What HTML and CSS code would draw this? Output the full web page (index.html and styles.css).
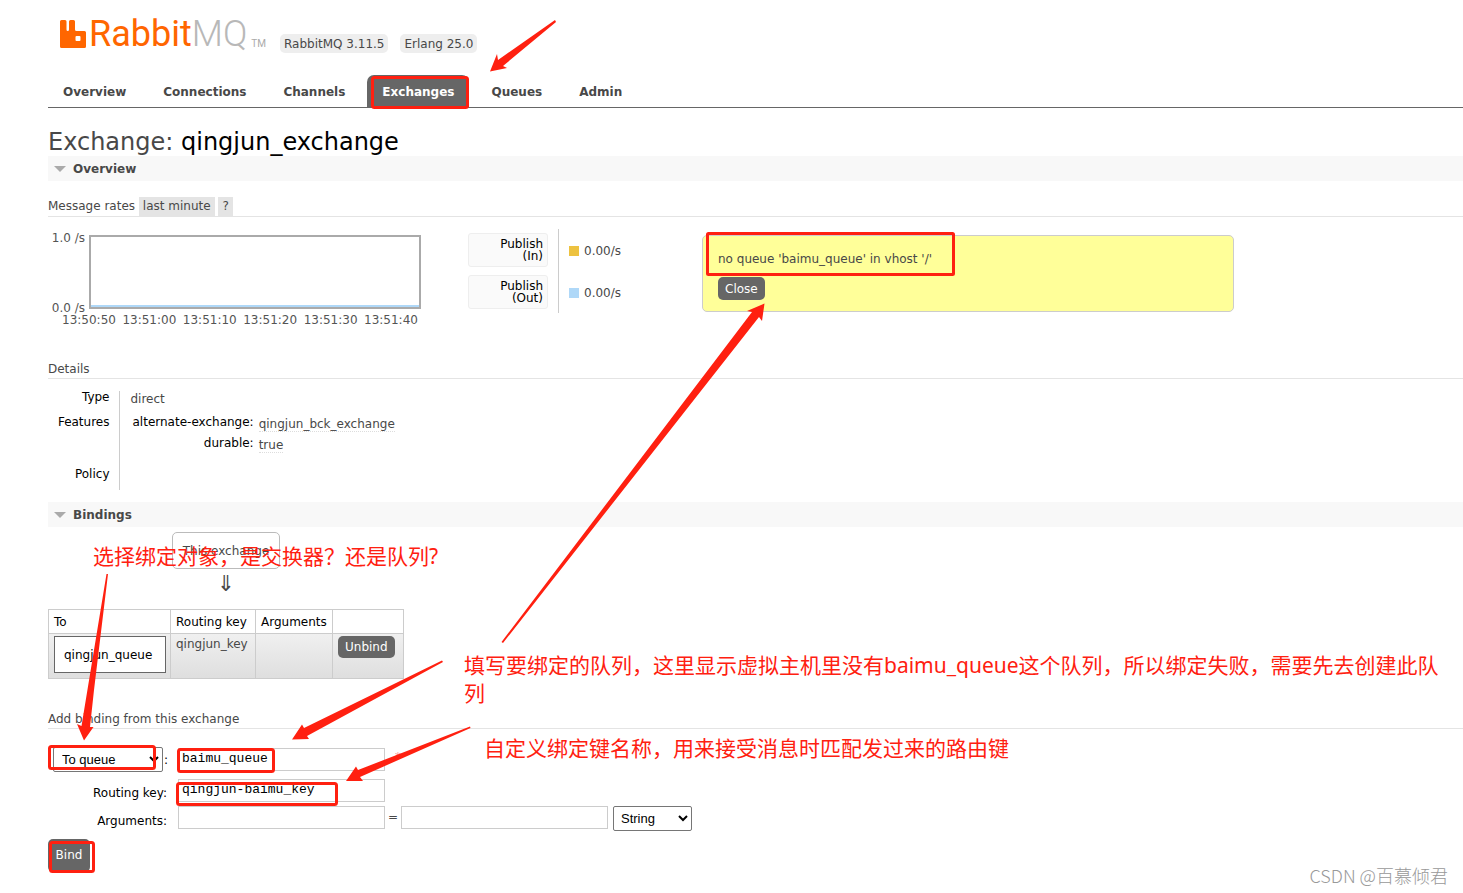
FILE: index.html
```html
<!DOCTYPE html>
<html lang="en">
<head>
<meta charset="utf-8">
<title>RabbitMQ Management</title>
<link rel="stylesheet" href="styles.css">
</head>
<body>
<header class="header">
  <div class="brand">
    <a class="logo" href="#" aria-label="RabbitMQ">
      <svg class="logo-mark" width="26" height="28" viewBox="0 0 26 28" aria-hidden="true"><path fill="#f60" fill-rule="evenodd" d="M1.500 0H5q1.500 0 1.500 1.500V9.500q0 1.500 1.250 1.500T9 9.500V1.500Q9 0 10.500 0h3q1.500 0 1.500 1.500V9.500q0 1.500 1.500 1.500h8q1.500 0 1.500 1.500v14q0 1.500-1.500 1.500h-23Q0 28 0 26.500v-25Q0 0 1.500 0zM16.500 16q-1 0-1 1v3q0 1 1 1h3q1 0 1-1V17q0-1-1-1z"/></svg>
      <span class="logo-name">Rabbit<span class="logo-mq">MQ</span></span><span class="logo-tm">TM</span>
    </a>
    <span class="version">RabbitMQ 3.11.5</span>
    <span class="version">Erlang 25.0</span>
  </div>
  <nav class="tabs">
    <a class="tab" href="#">Overview</a>
    <a class="tab" href="#">Connections</a>
    <a class="tab" href="#">Channels</a>
    <a class="tab selected" href="#">Exchanges</a>
    <a class="tab" href="#">Queues</a>
    <a class="tab" href="#">Admin</a>
  </nav>
</header>

<main class="main">
  <h1 class="title">Exchange: <b class="title-name">qingjun_exchange</b></h1>
  <section>
    <h2 class="bar">Overview</h2>
    <h3 class="subhead rates-head">Message rates <span class="tag">last minute</span> <span class="tag">?</span></h3>
    <div class="rates">
      <div class="chart">
        <div class="y-axis"><span>1.0 /s</span><span>0.0 /s</span></div>
        <div class="plot"></div>
        <div class="x-axis"><span>13:50:50</span><span>13:51:00</span><span>13:51:10</span><span>13:51:20</span><span>13:51:30</span><span>13:51:40</span></div>
      </div>
      <table class="legend">
        <tr><th><div class="legend-name">Publish<br>(In)</div></th><td><i class="swatch yellow"></i>0.00/s</td></tr>
        <tr><th><div class="legend-name">Publish<br>(Out)</div></th><td><i class="swatch blue"></i>0.00/s</td></tr>
      </table>
    </div>
    <h3 class="subhead">Details</h3>
    <table class="facts">
      <tr><th>Type</th><td>direct</td></tr>
      <tr class="features"><th>Features</th><td>
        <table class="mini">
          <tr><th>alternate-exchange:</th><td><abbr>qingjun_bck_exchange</abbr></td></tr>
          <tr><th>durable:</th><td><abbr>true</abbr></td></tr>
        </table>
      </td></tr>
      <tr class="policy"><th>Policy</th><td></td></tr>
    </table>
  </section>

  <section>
    <h2 class="bar">Bindings</h2>
    <div class="flow">
      <span class="exchange-box">This exchange</span>
      <span class="down">⇓</span>
    </div>
    <table class="list">
      <thead><tr><th class="col-to">To</th><th class="col-key">Routing key</th><th class="col-args">Arguments</th><th></th></tr></thead>
      <tbody><tr>
        <td><a class="queue-box" href="#">qingjun_queue</a></td>
        <td>qingjun_key</td><td></td>
        <td><button class="btn" type="button">Unbind</button></td>
      </tr></tbody>
    </table>
    <h3 class="subhead add-head">Add binding from this exchange</h3>
    <form class="form">
      <div class="field">
        <div class="label"><select class="select" aria-label="Destination type"><option>To queue</option><option>To exchange</option></select>:</div>
        <input class="input" type="text" aria-label="Destination" value="baimu_queue"><span class="required">*</span>
      </div>
      <div class="field">
        <label class="label" for="key">Routing key:</label>
        <input class="input" id="key" type="text" value="qingjun-baimu_key">
      </div>
      <div class="field args">
        <label class="label" for="arg">Arguments:</label>
        <input class="input" id="arg" type="text"><span class="equals">=</span>
        <input class="input" type="text" aria-label="Argument value">
        <select class="select type" aria-label="Argument type"><option>String</option><option>Number</option></select>
      </div>
      <button class="btn bind" type="button">Bind</button>
    </form>
  </section>
</main>

<div class="error" role="alert">
  <p class="error-text">no queue 'baimu_queue' in vhost '/'</p>
  <button class="btn" type="button">Close</button>
</div>

<svg class="marks" width="1463" height="893" viewBox="0 0 1463 893" aria-hidden="true">
  <g fill="none" stroke="#ff2010" stroke-width="3">
    <rect x="372.500" y="77.500" width="95" height="30" rx="2"/>
    <rect x="707.500" y="233.500" width="246" height="41" rx="1"/>
    <rect x="49.500" y="746.500" width="105" height="22" rx="2"/>
    <rect x="178.500" y="749.500" width="95" height="22" rx="2"/>
    <rect x="177.500" y="783.500" width="159" height="21" rx="2"/>
    <rect x="50.500" y="842.500" width="43" height="29" rx="2"/>
  </g>
  <g fill="#ff2010">
    <path d="M555 20L498 60 497 54 490 71.500 507 68 503 66 556 22z"/>
    <path d="M106.500 574L81.500 726 77 724 84 740.500 93.500 727 90 727 94 690 108 574z"/>
    <path d="M442 660.500L304 728 302 724.500 292 739.500 309 739 307 736 443 662z"/>
    <path d="M470 726.500L358 770 356 766.500 346 781 363 781 360 777 470.500 728z"/>
    <path d="M501.500 642L752 312 747 311 764.500 303.500 762 321 759 317 503 643z"/>
  </g>
</svg>
<p class="note note-target">选择绑定对象，是交换器？还是队列?</p>
<p class="note note-queue">填写要绑定的队列，这里显示虚拟主机里没有baimu_queue这个队列，所以绑定失败，需要先去创建此队列</p>
<p class="note note-key">自定义绑定键名称，用来接受消息时匹配发过来的路由键</p>
<p class="watermark">CSDN @百慕倾君</p>
</body>
</html>
```
FILE: styles.css
```css
* { box-sizing: border-box; }
body {
  position: relative;
  min-height: 100vh;
  margin: 0;
  padding-left: 48px;
  background: #fff;
  color: #484848;
  font: 12px/16px Verdana, "DejaVu Sans", sans-serif;
}
a { color: inherit; text-decoration: none; }
h1, h2, h3, p { margin: 0; font-weight: normal; }
table { border-collapse: collapse; }
th { color: #000; font-weight: normal; }
th, td { padding: 0; vertical-align: top; }

/* Header */
.brand { display: flex; align-items: flex-start; height: 75px; padding: 12px 0 0 12px; }
.logo { display: flex; width: 220px; color: #f60; font-family: Roboto, sans-serif; }
.logo-mark { margin: 8px 3px 0 0; }
.logo-name { font-size: 36px; line-height: 44px; }
.logo-mq { color: #b8b8b8; font-weight: 300; }
.logo-tm { margin: 24px 0 0 4px; color: #aaa; font-size: 10px; }
.version { margin: 22px 12px 0 0; padding: 2px 4px 1px; border-radius: 5px; background: #eee; }
.tabs { display: flex; gap: 7px; height: 33px; border-bottom: 1px solid #666; }
.tab { padding: 9px 15px 7px; border-radius: 7px 7px 0 0; font-weight: bold; }
.tab.selected { background: #666; color: #fff; }

/* Headings */
.title { padding-top: 21px; font-size: 24px; line-height: 27px; }
.title-name { color: #000; font-weight: normal; }
.bar {
  display: flex;
  align-items: center;
  gap: 7px;
  height: 25px;
  padding-left: 6px;
  background: #f8f8f8;
  font-size: 12px;
  font-weight: bold;
}
.bar::before { content: ""; border: 6px solid transparent; border-top-color: #aaa; border-bottom: 0; }
.subhead { height: 19px; border-bottom: 1px solid #e4e4e4; font-size: 12px; line-height: 18px; }
.rates-head { height: 20px; margin-top: 16px; line-height: 19px; }
.rates-head .tag { display: inline-block; padding: 0 4px; background: #e4e4e4; }

/* Message rates */
.rates { display: flex; gap: 47px; height: 143px; padding-top: 13px; }
.chart { display: grid; grid-template-columns: 41px 332px; grid-template-rows: 86px 16px; height: 102px; color: #545454; }
.y-axis { display: flex; flex-direction: column; justify-content: space-between; padding-right: 4px; text-align: right; white-space: nowrap; }
.plot { height: 74px; margin-top: 5px; border: 2px solid #aaa; box-shadow: inset 0 -2px #afd8f8; }
.x-axis { display: flex; grid-column: 1 / 3; justify-content: space-between; margin: -4px 3px 0 14px; }
.legend { height: 84px; margin-top: -1px; }
.legend th { padding: 4px 10px 4px 0; border-right: 1px solid #ccc; }
.legend td { padding: 14px 10px 12px; }
.legend-name {
  width: 80px;
  height: 34px;
  padding: 4px;
  border: 1px solid #eee;
  border-radius: 3px;
  background: #fafafa;
  line-height: 12px;
  text-align: right;
}
.swatch { display: inline-block; width: 10px; height: 10px; margin-right: 5px; vertical-align: -1px; }
.yellow { background: #edc240; }
.blue { background: #afd8f8; }

/* Details */
.facts { margin: 12px 0; }
.facts > tbody > tr > th { width: 71px; padding: 0 9px 0 0; border-right: 1px solid #ccc; line-height: 12px; text-align: right; }
.facts > tbody > tr > td { height: 25px; padding-left: 11px; }
.facts > tbody > .features > td { height: 52px; }
.facts > tbody > .policy > td { height: 22px; }
.mini th { padding: 0 5px 0 2px; line-height: 12px; text-align: right; }
.mini td { height: 21px; }
.mini abbr { border-bottom: 1px dotted #ddd; }

/* Bindings */
.flow { display: flex; flex-direction: column; align-items: center; width: 356px; height: 82px; padding-top: 5px; }
.exchange-box { padding: 10px 10px 9px; border: 1px solid #bbb; border-radius: 5px; }
.down { margin-top: 3px; font-size: 22px; line-height: 24px; }
.list { width: 356px; table-layout: fixed; }
.list th, .list td { height: 24px; padding: 4px 4px 3px 5px; border: 1px solid #ccc; text-align: left; }
.list td { height: 45px; padding: 2px 4px 5px 5px; }
.list tbody tr { background: linear-gradient(#f0f0f0, #dedede); }
.col-to { width: 122px; }
.col-key { width: 85px; }
.col-args { width: 77px; }
.queue-box { display: block; padding: 10px 9px 9px; border: 1px solid #666; background: #fff; color: #000; }
.btn { height: 22px; padding: 0 7px; border: 0; border-radius: 5px; background: #666; color: #fff; font: inherit; }

/* Binding form */
.add-head { margin-top: 31px; }
.form { padding-top: 17px; }
.field { display: flex; height: 32px; }
.field:first-child { height: 31px; }
.label { display: flex; justify-content: flex-end; width: 120px; margin-right: 10px; padding: 8px 1px 0 0; color: #000; }
div.label { padding: 1px 0 0; line-height: 26px; }
.select { width: 110px; height: 25px; margin-right: 1px; padding-left: 4px; border: 1px solid #767676; border-radius: 2px; background: #fff; color: #000; font: 13px "Liberation Sans", sans-serif; }
.input { width: 207px; height: 23px; margin-top: 2px; padding: 0 3px 2px; border: 1px solid #ccc; background: #fff; font: 13px "Liberation Mono", monospace; }
.required { margin: 3px 0 0 10px; color: #f88; }
.args .input { margin-top: -3px; }
.args .label { padding-top: 4px; }
.equals { width: 16px; text-align: center; }
.type { width: 79px; margin: -3px 0 0 5px; padding-left: 3px; }
.bind { width: 42px; height: 33px; margin: -2px 0 0; padding: 0 0 2px; }

/* Error popup */
.error { position: absolute; top: 235px; left: 702px; width: 532px; padding: 15px 15px 11px; border: 1px solid #ccc; border-radius: 5px; background: #ff9; }
.error-text { margin-bottom: 10px; }
.error .btn { display: block; height: 23px; }

/* Annotations over the page */
.marks { position: absolute; top: 0; left: 0; pointer-events: none; }
.note { position: absolute; color: #ff2010; font: 21px/28px "Noto Sans", "Noto Sans CJK SC", sans-serif; }
.note-target { top: 542px; left: 93px; }
.note-queue { top: 651px; left: 464px; width: 986px; }
.note-key { top: 734px; left: 484px; }
.watermark { position: absolute; top: 863px; right: 15px; color: #999; font: 300 18px/24px "Noto Sans CJK SC", sans-serif; }
```
